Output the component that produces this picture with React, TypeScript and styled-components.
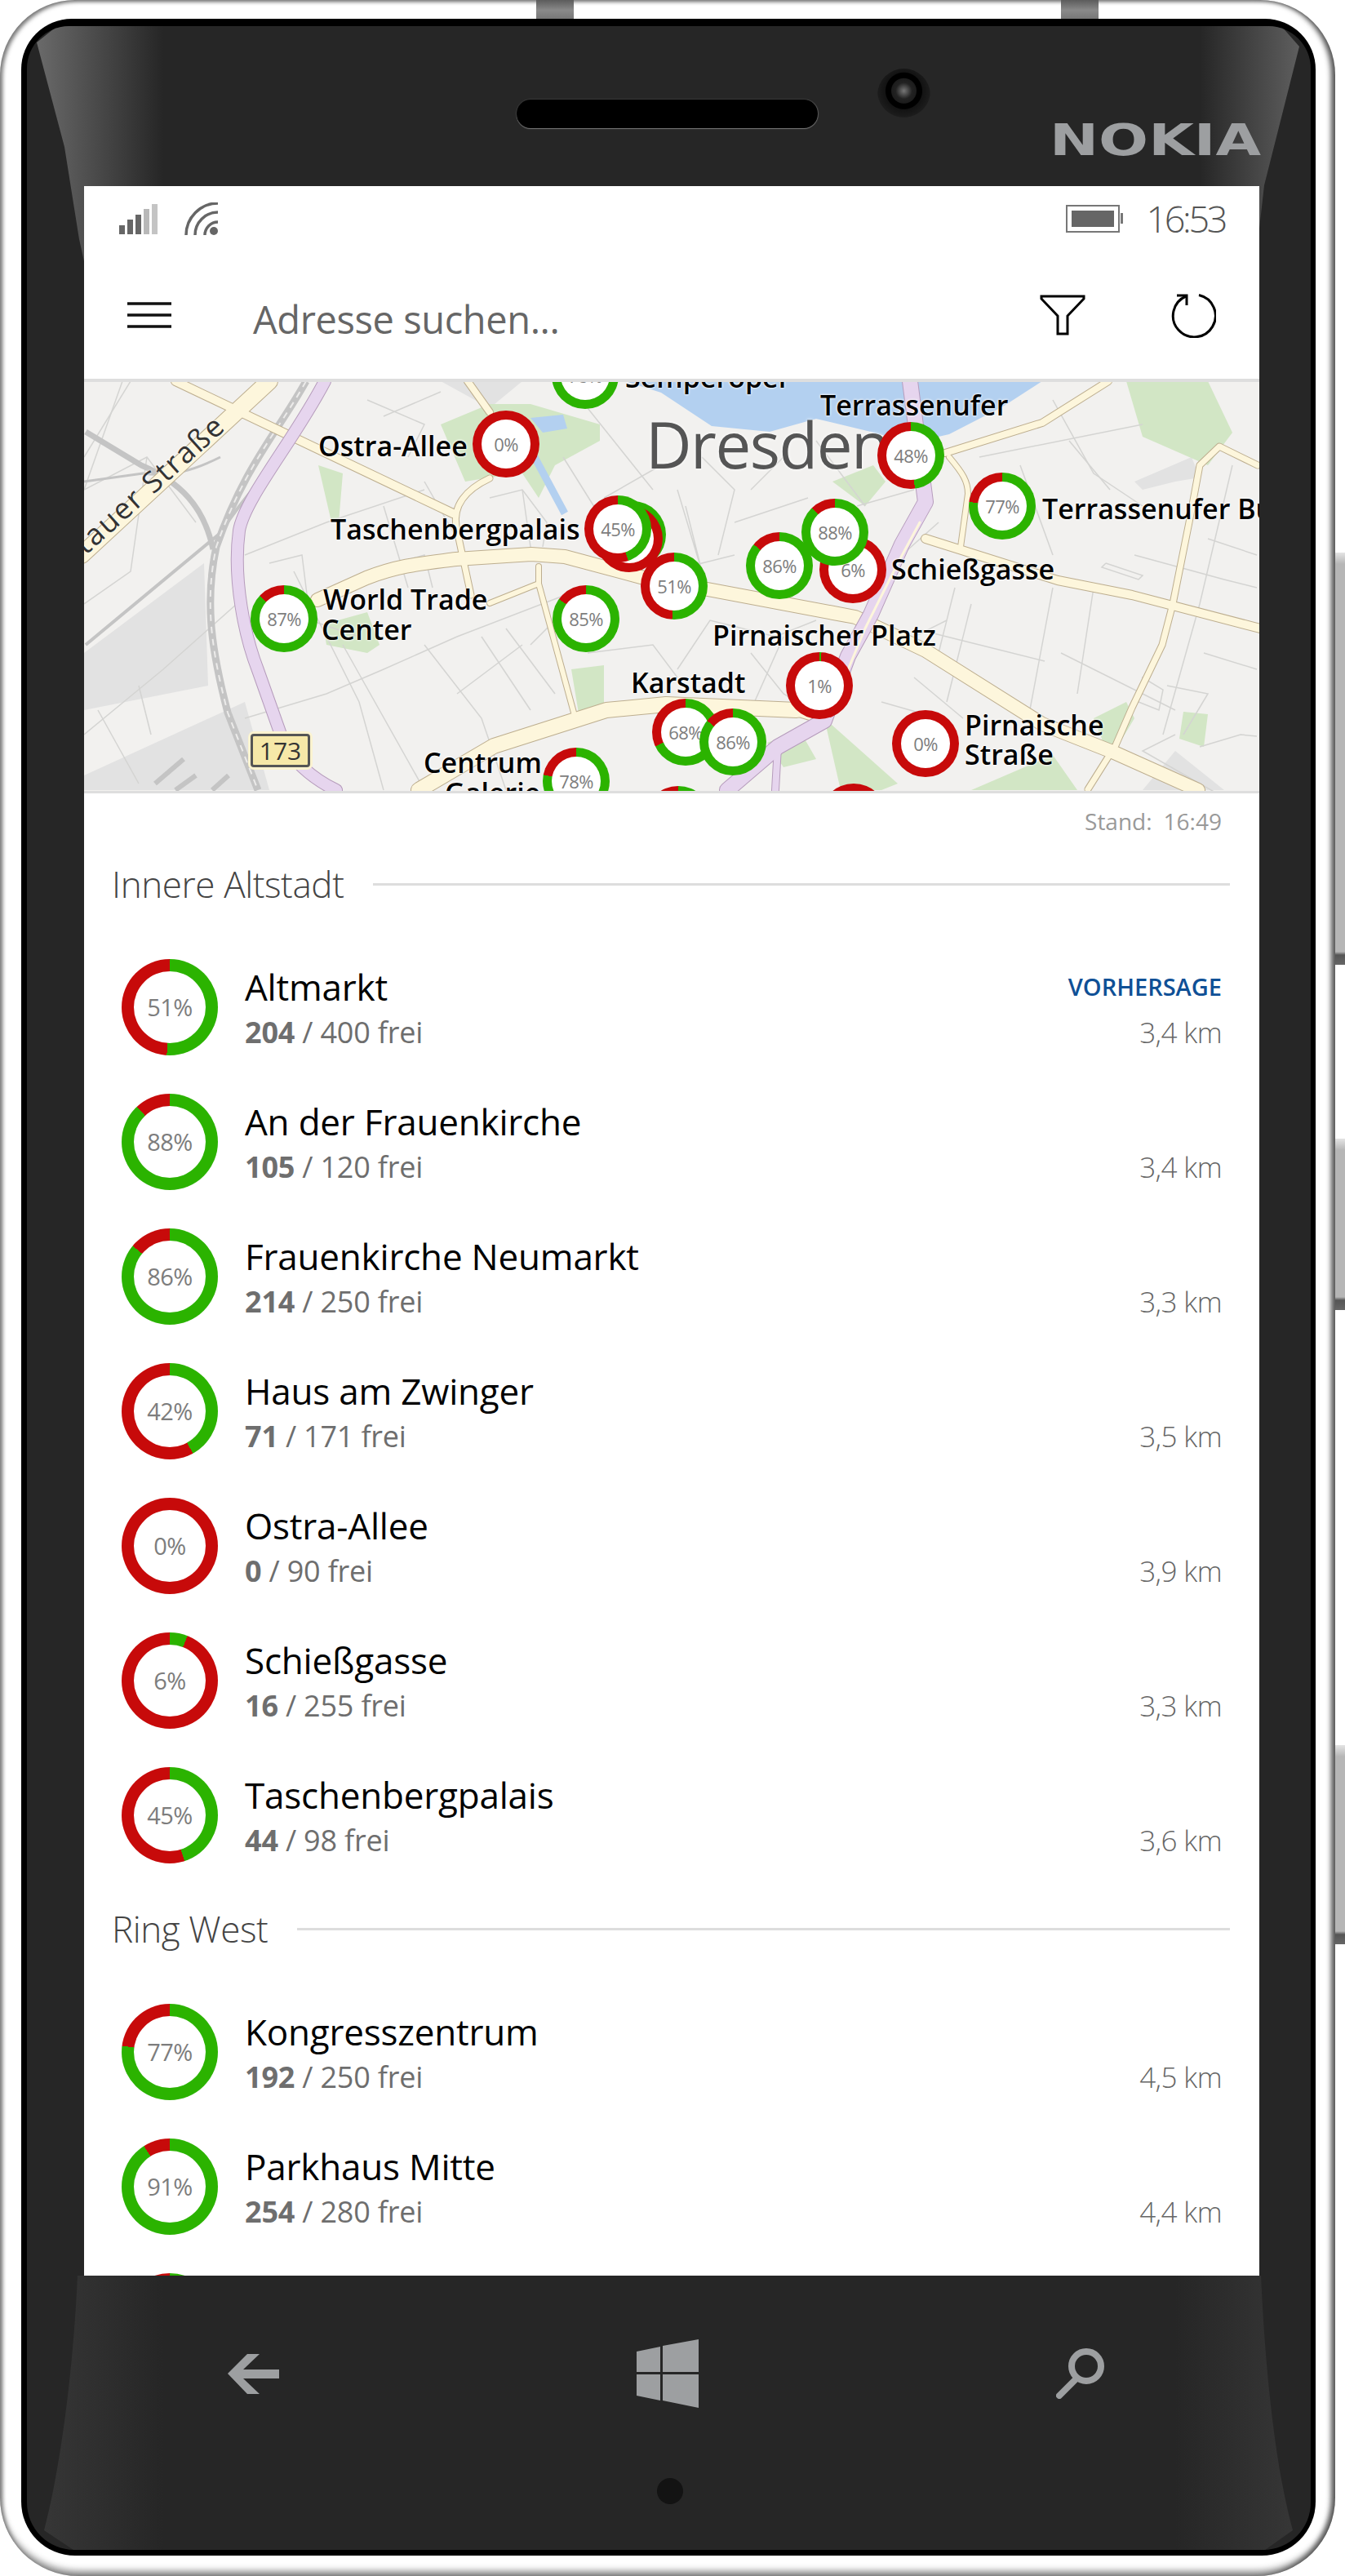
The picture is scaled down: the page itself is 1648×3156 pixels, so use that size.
import React from 'react'
import styled, { createGlobalStyle } from 'styled-components'

const FONT = '"Open Sans", "Noto Sans", sans-serif'
const MAP_X = 103
const MAP_Y = 468

type Garage = { name: string; free: number; total: number; pct: number; km: string; forecast?: boolean }

const altstadt: Garage[] = [
  { name: 'Altmarkt', free: 204, total: 400, pct: 51, km: '3,4 km', forecast: true },
  { name: 'An der Frauenkirche', free: 105, total: 120, pct: 88, km: '3,4 km' },
  { name: 'Frauenkirche Neumarkt', free: 214, total: 250, pct: 86, km: '3,3 km' },
  { name: 'Haus am Zwinger', free: 71, total: 171, pct: 42, km: '3,5 km' },
  { name: 'Ostra-Allee', free: 0, total: 90, pct: 0, km: '3,9 km' },
  { name: 'Schießgasse', free: 16, total: 255, pct: 6, km: '3,3 km' },
  { name: 'Taschenbergpalais', free: 44, total: 98, pct: 45, km: '3,6 km' },
]

const ringWest: Garage[] = [
  { name: 'Kongresszentrum', free: 192, total: 250, pct: 77, km: '4,5 km' },
  { name: 'Parkhaus Mitte', free: 254, total: 280, pct: 91, km: '4,4 km' },
]

// drawn back to front, the overlaps are as in the picture
const pins = [
  { x: 717, y: 460, pct: 78 },
  { x: 620, y: 544, pct: 0 },
  { x: 775, y: 655, pct: 40 },
  { x: 771, y: 660, pct: 0 },
  { x: 757, y: 648, pct: 45 },
  { x: 348, y: 758, pct: 87 },
  { x: 718, y: 758, pct: 85 },
  { x: 826, y: 718, pct: 51 },
  { x: 706, y: 957, pct: 78 },
  { x: 1116, y: 558, pct: 48 },
  { x: 1228, y: 620, pct: 77 },
  { x: 955, y: 693, pct: 86 },
  { x: 1045, y: 698, pct: 6 },
  { x: 1023, y: 652, pct: 88 },
  { x: 1004, y: 840, pct: 1 },
  { x: 840, y: 897, pct: 68 },
  { x: 898, y: 909, pct: 86 },
  { x: 1134, y: 911, pct: 0 },
  { x: 831, y: 1004, pct: 45 },
  { x: 1046, y: 1001, pct: 0 },
]

const labels = [
  { x: 766, y: 475, text: 'Semperoper' },
  { x: 390, y: 559, text: 'Ostra-Allee' },
  { x: 405, y: 661, text: 'Taschenbergpalais' },
  { x: 396, y: 747, text: 'World Trade' },
  { x: 394, y: 784, text: 'Center' },
  { x: 519, y: 947, text: 'Centrum' },
  { x: 545, y: 984, text: 'Galerie' },
  { x: 773, y: 849, text: 'Karstadt' },
  { x: 1005, y: 509, text: 'Terrassenufer' },
  { x: 1277, y: 636, text: 'Terrassenufer Bus' },
  { x: 1092, y: 710, text: 'Schießgasse' },
  { x: 873, y: 791, text: 'Pirnaischer Platz' },
  { x: 1182, y: 901, text: 'Pirnaische' },
  { x: 1182, y: 937, text: 'Straße' },
]

const minorStreets = [
  'M150 467L103 600', 'M103 560L160 467', 'M240 640L180 560L103 600', 'M180 560L160 700L103 740',
  'M120 870L170 960', 'M103 900L200 820L290 740', 'M170 840L185 900', 'M300 680L400 640L520 600',
  'M300 880L400 850L470 820L560 780L690 730', 'M360 700L440 860L470 968', 'M420 790L520 968',
  'M340 900L400 968', 'M520 790L590 880L620 968', 'M560 850L640 790', 'M590 780L650 870',
  'M620 770L680 850', 'M650 790L700 740', 'M470 620L500 720', 'M330 690L370 680L380 760L440 780',
  'M450 700L520 680L530 720', 'M450 490L520 520L500 560', 'M470 510L540 480', 'M520 590L560 660',
  'M640 600L650 670', 'M600 610L640 600L670 640L665 670', 'M690 560L740 640', 'M720 500L800 600',
  'M740 610L810 570', 'M830 600L860 700L840 620', 'M860 560L900 600L880 680', 'M900 640L990 610',
  'M820 700L900 680', 'M920 600L960 560', 'M830 820L870 760L950 780L1000 760', 'M960 780L920 870',
  'M720 800L800 790L830 830', 'M660 900L760 860', 'M1170 720L1150 800', 'M1250 570L1290 680',
  'M1290 490L1340 580L1400 620', 'M1200 560L1400 520', 'M1310 540L1360 600', 'M1120 770L1280 810',
  'M1190 740L1160 860', 'M1290 720L1260 880', 'M1340 720L1320 850', 'M1390 680L1500 710L1540 720',
  'M1355 690L1400 705L1395 710L1350 695L1355 690', 'M1480 660L1540 680', 'M1510 570L1470 740L1425 900',
  'M1475 800L1540 820', 'M1430 840L1480 850L1450 900', 'M1300 800L1440 870', 'M1400 830L1425 845L1420 870L1395 860Z',
  'M1440 900L1400 920L1540 1000', 'M1470 915L1520 900L1540 902', 'M1120 830L1180 880', 'M1080 860L1150 880',
  'M1000 540L1060 620', 'M1050 620L1120 600', 'M1060 720L1150 640', 'M1100 790L1160 760', 'M920 800L960 850L1010 880',
]

const GlobalStyle = createGlobalStyle`
  html, body {
    margin: 0;
    background: #fff;
  }
  body {
    font-family: ${FONT};
  }
`

const Page = styled.div`
  position: relative;
  width: 1648px;
  height: 3156px;
  overflow: hidden;
`
const TopKey = styled.div<{ $x: number }>`
  position: absolute;
  top: 0;
  left: ${({ $x }) => $x}px;
  width: 46px;
  height: 23px;
  background: linear-gradient(180deg, #5c5c5c, #8a8a8a 55%, #777);
  z-index: 2;
`
const SideKey = styled.div<{ $y: number; $h: number }>`
  position: absolute;
  right: 0;
  top: ${({ $y }) => $y}px;
  width: 12px;
  height: ${({ $h }) => $h}px;
  background: linear-gradient(180deg, #e4e4e4 0, #b6b6b6 14px, #b6b6b6 calc(100% - 16px), #555 calc(100% - 12px), #666 100%);
`
const Frame = styled.div`
  box-sizing: border-box;
  width: 1636px;
  height: 3156px;
  padding: 23px 24px 25px 26px;
  background: #fff;
  border-radius: 92px 92px 96px 96px;
  box-shadow: inset -7px 0 6px -2px #555, inset 4px 3px 5px -1px #777, inset 0 -9px 8px -3px #8a8a8a;
`
const BlackRim = styled.div`
  box-sizing: border-box;
  height: 100%;
  padding: 9px 6px 7px 7px;
  background: #000;
  border-radius: 62px 62px 66px 66px;
`
const Bezel = styled.div`
  position: relative;
  height: 100%;
  background: #262626;
  border-radius: 52px 52px 58px 58px;
  overflow: hidden;
`
const Gloss = styled.svg`
  position: absolute;
  left: 0;
  top: 0;
`
const BezelTop = styled.div`
  position: relative;
  display: flex;
  align-items: flex-start;
  height: 196px;
  padding-left: 600px;
`
const Speaker = styled.div`
  width: 369px;
  height: 35px;
  margin-top: 90px;
  background: #000;
  border-radius: 17px;
  box-shadow: 0 1px 1px #777, 1px 0 1px #555, 0 0 2px #555;
`
const Camera = styled.div`
  width: 65px;
  height: 65px;
  margin: 52px 0 0 73px;
  border-radius: 50%;
  background:
    radial-gradient(circle at 50% 42%, #777 0, #444 6px, #222 10px, #1c1c1c 15px, #000 16px, #000 22px, #131313 23px, #1c1c1c 32px, #262626 33px);
`
const Logo = styled.div`
  margin: 113px 0 0 146px;
  font-family: "DejaVu Sans", sans-serif;
  font-weight: 700;
  font-size: 54px;
  line-height: 54px;
  color: #9d9fa1;
  transform: scaleX(1.33);
  transform-origin: left center;
`
const Screen = styled.div`
  position: relative;
  width: 1440px;
  height: 2560px;
  margin-left: 70px;
  background: #fff;
  overflow: hidden;
`
const StatusBar = styled.div`
  display: flex;
  align-items: center;
  gap: 33px;
  height: 80px;
  padding: 0 42px 0 43px;
`
const Battery = styled.div`
  position: relative;
  box-sizing: border-box;
  width: 66px;
  height: 34px;
  margin-left: auto;
  padding: 5px;
  border: 2px solid #777;
  &::after {
    content: '';
    position: absolute;
    right: -6px;
    top: 8px;
    width: 3px;
    height: 13px;
    background: #777;
  }
`
const BatteryFill = styled.div`
  height: 100%;
  background: #666;
`
const Clock = styled.div`
  font-weight: 300;
  font-size: 45px;
  letter-spacing: -3.4px;
  line-height: 50px;
  color: #555;
`
const AppBar = styled.div`
  display: flex;
  align-items: center;
  height: 156px;
  padding: 0 53px;
`
const SearchHint = styled.div`
  margin-left: 100px;
  padding-top: 10px;
  font-size: 47px;
  letter-spacing: -0.4px;
  line-height: 60px;
  color: #666;
`
const FilterButton = styled.svg`
  margin-left: auto;
  margin-right: 104px;
`
const MapBox = styled.div`
  position: relative;
  height: 501px;
  border-top: 4px solid #dedede;
  border-bottom: 3px solid #dedede;
  background: #f2f1ef;
  overflow: hidden;
`
const MapArt = styled.svg`
  display: block;
`
const PinSpot = styled.div<{ $x: number; $y: number }>`
  position: absolute;
  left: ${({ $x }) => $x - MAP_X - 41}px;
  top: ${({ $y }) => $y - MAP_Y - 41}px;
`
const Donut = styled.div<{ $pct: number; $size: number; $ring: number }>`
  box-sizing: border-box;
  display: flex;
  width: ${({ $size }) => $size}px;
  height: ${({ $size }) => $size}px;
  padding: ${({ $ring }) => $ring}px;
  border-radius: 50%;
  background: conic-gradient(#2bb300 0 ${({ $pct }) => $pct}%, #c70a0a 0);
`
const Hole = styled.div<{ $font: number }>`
  display: flex;
  flex: 1;
  align-items: center;
  justify-content: center;
  border-radius: 50%;
  background: #fff;
  font-size: ${({ $font }) => $font}px;
  letter-spacing: -0.6px;
  color: #7d7d7d;
`
const PlaceLabel = styled.div<{ $x: number; $y: number }>`
  position: absolute;
  left: ${({ $x }) => $x - MAP_X}px;
  top: ${({ $y }) => $y - MAP_Y - 30}px;
  font-weight: 600;
  font-size: 34px;
  line-height: 34px;
  white-space: nowrap;
  color: #000;
  text-shadow: 0 0 3px #fff, 0 0 3px #fff;
`
const CityLabel = styled.div`
  position: absolute;
  left: ${791 - MAP_X}px;
  top: ${518 - MAP_Y - 14}px;
  font-size: 78px;
  letter-spacing: -1.5px;
  line-height: 80px;
  color: #555;
  text-shadow: 0 0 4px #fff;
`
const StreetLabel = styled.div`
  position: absolute;
  right: 1273px;
  top: 29px;
  font-size: 36px;
  letter-spacing: 2px;
  line-height: 36px;
  white-space: nowrap;
  color: #333;
  text-shadow: 0 0 3px #fff;
  transform: rotate(-42deg);
  transform-origin: right center;
`
const RoadShield = styled.div`
  position: absolute;
  left: ${307 - MAP_X}px;
  top: ${899 - MAP_Y}px;
  box-sizing: border-box;
  width: 73px;
  height: 41px;
  border: 3px solid #555;
  border-radius: 4px;
  background: #f6e8a8;
  box-shadow: 0 0 0 3px #fbf3d0;
  font-size: 30px;
  line-height: 35px;
  text-align: center;
  color: #333;
`
const StandRow = styled.div`
  display: flex;
  justify-content: flex-end;
  gap: 14px;
  height: 68px;
  margin-bottom: 8px;
  padding-right: 46px;
  font-size: 28px;
  line-height: 68px;
  color: #999;
`
const SectionHead = styled.div`
  display: flex;
  align-items: center;
  gap: 36px;
  height: 70px;
  margin-bottom: 32px;
  padding: 0 36px 0 34px;
`
const SectionName = styled.div`
  font-weight: 300;
  font-size: 44px;
  letter-spacing: -0.4px;
  white-space: nowrap;
  color: #444;
`
const SectionRule = styled.div`
  flex: 1;
  height: 3px;
  background: #ddd;
`
const Row = styled.div`
  display: flex;
  align-items: center;
  height: 165px;
  padding: 2px 46px 0;
  box-sizing: border-box;
`
const RowText = styled.div`
  flex: 1;
  margin-left: 33px;
  padding-top: 6px;
`
const RowName = styled.div`
  height: 56px;
  font-size: 44px;
  letter-spacing: -0.2px;
  line-height: 56px;
  color: #000;
`
const RowCount = styled.div`
  height: 56px;
  font-size: 36px;
  letter-spacing: -0.2px;
  line-height: 56px;
  color: #6e6e6e;
`
const RowFree = styled.b`
  font-weight: 700;
`
const RowSide = styled.div`
  padding-top: 6px;
  text-align: right;
`
const Forecast = styled.div`
  height: 56px;
  font-weight: 600;
  font-size: 29px;
  line-height: 56px;
  color: #0f5096;
`
const Distance = styled.div`
  height: 56px;
  font-size: 35px;
  font-weight: 300;
  letter-spacing: -0.6px;
  line-height: 56px;
  color: #666;
`
const SectionGap = styled.div`
  height: 23px;
`
const HardwareNav = styled.div`
  position: relative;
  display: flex;
  align-items: center;
  justify-content: space-between;
  height: 240px;
  padding: 0 252px 0 246px;
`
const MicRow = styled.div`
  position: relative;
  padding: 8px 0 0 772px;
`
const Mic = styled.div`
  width: 32px;
  height: 32px;
  border-radius: 50%;
  background: #131313;
`

const Ring = ({ pct, size, ring, font }: { pct: number; size: number; ring: number; font: number }) => (
  <Donut $pct={pct} $size={size} $ring={ring}>
    <Hole $font={font}>{pct}%</Hole>
  </Donut>
)

const GarageRow = ({ garage }: { garage: Garage }) => (
  <Row>
    <Ring pct={garage.pct} size={118} ring={15} font={29} />
    <RowText>
      <RowName>{garage.name}</RowName>
      <RowCount>
        <RowFree>{garage.free}</RowFree> / {garage.total} frei
      </RowCount>
    </RowText>
    <RowSide>
      <Forecast>{garage.forecast ? 'VORHERSAGE' : ''}</Forecast>
      <Distance>{garage.km}</Distance>
    </RowSide>
  </Row>
)

const MapDrawing = () => (
  <MapArt width={1440} height={501} viewBox={`${MAP_X} ${MAP_Y} 1440 501`}>
    <g fill="#e2e2e2">
      <path d="M103 800L250 690L255 840L103 870Z" />
      <path d="M103 950L300 860L330 968H103Z" />
      <path d="M540 467H640L600 500Z" />
      <path d="M1390 590L1460 560L1470 585L1440 590L1400 600Z" />
      <path d="M1400 968L1440 920L1500 968Z" />
    </g>
    <g fill="#d2e6c5">
      <path d="M540 520L600 495L650 495L735 520L735 540L680 570L660 610L640 580L600 585L570 590Z" />
      <path d="M390 570L420 580L415 640L405 635Z" />
      <path d="M396 765L450 750L465 790L450 800L400 790Z" />
      <path d="M700 820L740 815L740 880L710 880Z" />
      <path d="M1380 467H1480L1510 530L1480 570L1400 535Z" />
      <path d="M1020 590L1070 570L1085 590L1060 620Z" />
      <path d="M1340 880L1380 860L1390 880L1360 930Z" />
      <path d="M1450 872L1480 875L1475 915L1445 905Z" />
      <path d="M1010 880L1100 960L1080 968H1030Z" />
      <path d="M1190 968L1290 925L1320 968Z" />
      <path d="M940 910L980 895L1000 930L960 940Z" />
    </g>
    <path
      d="M766 467L810 481L872 522L943 529L1000 513L1067 529L1115 543L1163 532L1229 498L1277 467Z"
      fill="#b3d0f0"
    />
    <path d="M650 512L690 508L695 525L665 530Z" fill="#b3d0f0" />
    <path d="M655 560L692 629" stroke="#b3d0f0" strokeWidth={9} fill="none" />
    <g fill="none" stroke="#d4d4d2" strokeWidth={1.5}>
      {minorStreets.map((d) => (
        <path key={d} d={d} />
      ))}
    </g>
    <g fill="none" stroke="#c4c4c4" strokeLinejoin="round">
      <path d="M375 467C340 530 300 570 265 670C250 740 260 800 279 873L316 968" strokeWidth={9} />
      <path d="M105 529L173 570C220 590 250 620 261 673" strokeWidth={7} />
      <path d="M105 790L270 653C290 620 320 590 340 560" strokeWidth={4} />
      <path d="M103 590L175 580C210 585 240 575 270 560" strokeWidth={3} />
      <path d="M190 960L225 930M215 968L240 950M260 968L280 950" strokeWidth={6} />
    </g>
    <g fill="none" stroke="#ecebea" strokeWidth={2} strokeDasharray="8 7">
      <path d="M375 467C340 530 300 570 265 670C250 740 260 800 279 873L316 968" />
    </g>
    <g fill="none" strokeLinejoin="round" strokeLinecap="round">
      <g stroke="#bdae8f">
        <path d="M100 680L330 467" strokeWidth={22} />
        <path d="M215 467L555 629" strokeWidth={12} />
        <path d="M573 467L600 505" strokeWidth={10} />
        <path d="M600 586C570 600 555 620 559 645L577 729" strokeWidth={9} />
        <path d="M389 735L449 708C490 692 520 690 559 685L651 679L692 682L789 708L867 722L1048 756L1134 797L1277 887L1363 921L1468 968" strokeWidth={18} />
        <path d="M660 694V715L600 739" strokeWidth={8} />
        <path d="M660 715L706 884" strokeWidth={8} />
        <path d="M513 968L605 914L743 870L816 863L976 870" strokeWidth={20} />
        <path d="M1158 555L1277 518L1358 467" strokeWidth={10} />
        <path d="M1163 560C1180 580 1186 590 1186 605L1177 670" strokeWidth={8} />
        <path d="M1134 660L1210 684L1296 711L1387 729L1544 770" strokeWidth={12} />
        <path d="M1541 570L1494 547L1470 570L1457 640L1437 740L1424 790L1387 867L1367 913L1333 967" strokeWidth={9} />
        <path d="M976 870L1010 880" strokeWidth={16} />
      </g>
      <g stroke="#fdf6dc">
        <path d="M100 680L330 467" strokeWidth={20} />
        <path d="M215 467L555 629" strokeWidth={10} />
        <path d="M573 467L600 505" strokeWidth={8} />
        <path d="M600 586C570 600 555 620 559 645L577 729" strokeWidth={7} />
        <path d="M389 735L449 708C490 692 520 690 559 685L651 679L692 682L789 708L867 722L1048 756L1134 797L1277 887L1363 921L1468 968" strokeWidth={16} />
        <path d="M660 694V715L600 739" strokeWidth={6} />
        <path d="M660 715L706 884" strokeWidth={6} />
        <path d="M513 968L605 914L743 870L816 863L976 870" strokeWidth={18} />
        <path d="M1158 555L1277 518L1358 467" strokeWidth={8} />
        <path d="M1163 560C1180 580 1186 590 1186 605L1177 670" strokeWidth={6} />
        <path d="M1134 660L1210 684L1296 711L1387 729L1544 770" strokeWidth={10} />
        <path d="M1541 570L1494 547L1470 570L1457 640L1437 740L1424 790L1387 867L1367 913L1333 967" strokeWidth={7} />
        <path d="M976 870L1010 880" strokeWidth={14} />
      </g>
      <g stroke="#b69cbc">
        <path d="M398 467C360 540 300 610 293 650C285 710 300 780 316 821L343 897C352 930 385 955 412 968" strokeWidth={16} />
        <path d="M1115 467L1134 615L1105 667L1067 753L1039 804L1010 883L953 915L891 968" strokeWidth={20} />
        <path d="M953 915L950 968" strokeWidth={10} />
      </g>
      <g stroke="#e6d5ee">
        <path d="M398 467C360 540 300 610 293 650C285 710 300 780 316 821L343 897C352 930 385 955 412 968" strokeWidth={14} />
        <path d="M1115 467L1134 615L1105 667L1067 753L1039 804L1010 883L953 915L891 968" strokeWidth={18} />
        <path d="M953 915L950 968" strokeWidth={8} />
      </g>
      <path d="M1127 640L1100 690L1060 770L1035 830" stroke="#fdf6dc" strokeWidth={3} />
    </g>
  </MapArt>
)

const App = () => (
  <Page>
    <GlobalStyle />
    <TopKey $x={657} />
    <TopKey $x={1300} />
    <SideKey $y={677} $h={505} />
    <SideKey $y={1395} $h={210} />
    <SideKey $y={2138} $h={244} />
    <Frame>
      <BlackRim>
        <Bezel>
          <Gloss width={1573} height={3092} viewBox="33 32 1573 3092">
            <defs>
              <linearGradient id="glossLeft" gradientUnits="userSpaceOnUse" x1="45" y1="0" x2="200" y2="0">
                <stop offset="0" stopColor="#6a6a6a" />
                <stop offset="1" stopColor="#262626" />
              </linearGradient>
              <linearGradient id="glossRight" gradientUnits="userSpaceOnUse" x1="1592" y1="0" x2="1470" y2="0">
                <stop offset="0" stopColor="#5e5e5e" />
                <stop offset="1" stopColor="#262626" />
              </linearGradient>
              <linearGradient id="sheenLeft" gradientUnits="userSpaceOnUse" x1="55" y1="0" x2="200" y2="0">
                <stop offset="0" stopColor="#363636" />
                <stop offset="1" stopColor="#262626" />
              </linearGradient>
              <linearGradient id="sheenRight" gradientUnits="userSpaceOnUse" x1="1584" y1="0" x2="1440" y2="0">
                <stop offset="0" stopColor="#363636" />
                <stop offset="1" stopColor="#262626" />
              </linearGradient>
            </defs>
            <path d="M45 52L70 32H220V320H103L97 293L79 180Z" fill="url(#glossLeft)" />
            <path d="M1592 57L1570 32H1460V280H1543L1549 227Z" fill="url(#glossRight)" />
            <path d="M95 2788C90 2900 75 3020 54 3100L90 3124H220V2788Z" fill="url(#sheenLeft)" />
            <path d="M1545 2788C1550 2900 1562 3020 1584 3100L1550 3124H1420V2788Z" fill="url(#sheenRight)" />
          </Gloss>
          <BezelTop>
            <Speaker />
            <Camera />
            <Logo>NOKIA</Logo>
          </BezelTop>
          <Screen>
            <StatusBar>
              <svg width={47} height={37} viewBox="0 0 47 37">
                <rect x={0} y={26} width={7} height={11} fill="#666" />
                <rect x={10} y={19} width={7} height={18} fill="#666" />
                <rect x={20} y={13} width={7} height={24} fill="#666" />
                <rect x={30} y={6} width={7} height={31} fill="#b8b8b8" />
                <rect x={40} y={0} width={7} height={37} fill="#c4c4c4" />
              </svg>
              <svg width={41} height={40} viewBox="0 0 41 40" fill="none" stroke="#666" strokeWidth={3.5}>
                <path d="M2 40A39 39 0 0 1 41 1" />
                <path d="M13 40A28 28 0 0 1 41 12" />
                <path d="M25 40A16 16 0 0 1 41 24" />
                <circle cx={36} cy={35} r={5} fill="#666" stroke="none" />
              </svg>
              <Battery>
                <BatteryFill />
              </Battery>
              <Clock>16:53</Clock>
            </StatusBar>
            <AppBar>
              <svg width={54} height={32} viewBox="0 0 54 32" stroke="#111" strokeWidth={3.5}>
                <path d="M0 2H54M0 16H54M0 30H54" />
              </svg>
              <SearchHint>Adresse suchen...</SearchHint>
              <FilterButton width={56} height={50} viewBox="1275 363 56 50" fill="none" stroke="#000" strokeWidth={3}>
                <path d="M1277 365H1329V368L1309 389V411H1297V389L1277 368Z" />
              </FilterButton>
              <svg width={56} height={56} viewBox="1435 359 56 56" fill="none" stroke="#000" strokeWidth={3}>
                <path d="M1470 362.5A26 26 0 1 1 1454 364" />
                <path d="M1443 363H1455V375" />
              </svg>
            </AppBar>
            <MapBox>
              <MapDrawing />
              <StreetLabel>Löbtauer Straße</StreetLabel>
              <CityLabel>Dresden</CityLabel>
              <RoadShield>173</RoadShield>
              {labels.map((label) => (
                <PlaceLabel key={label.text} $x={label.x} $y={label.y}>
                  {label.text}
                </PlaceLabel>
              ))}
              {pins.map((pin) => (
                <PinSpot key={`${pin.x}-${pin.y}`} $x={pin.x} $y={pin.y}>
                  <Ring pct={pin.pct} size={82} ring={11} font={22} />
                </PinSpot>
              ))}
            </MapBox>
            <StandRow>
              <span>Stand:</span>
              <span>16:49</span>
            </StandRow>
            <SectionHead>
              <SectionName>Innere Altstadt</SectionName>
              <SectionRule />
            </SectionHead>
            {altstadt.map((garage) => (
              <GarageRow key={garage.name} garage={garage} />
            ))}
            <SectionGap />
            <SectionHead>
              <SectionName>Ring West</SectionName>
              <SectionRule />
            </SectionHead>
            {ringWest.map((garage) => (
              <GarageRow key={garage.name} garage={garage} />
            ))}
            <Row>
              <Ring pct={93} size={118} ring={15} font={29} />
            </Row>
          </Screen>
          <HardwareNav>
            <svg width={63} height={49} viewBox="281 2883 63 49" fill="#9d9fa1">
              <path d="M281 2907L305 2883H320L300 2902H344V2913H300L320 2932H305Z" />
            </svg>
            <svg width={76} height={84} viewBox="787 2866 76 84" fill="#9d9fa1">
              <path d="M787 2881L816 2875V2906H787Z" />
              <path d="M819 2874L863 2866V2906H819Z" />
              <path d="M787 2909H816V2941L787 2935Z" />
              <path d="M819 2909H863V2950L819 2941Z" />
            </svg>
            <svg width={60} height={62} viewBox="1305 2878 60 62" fill="none" stroke="#9d9fa1" strokeWidth={8}>
              <circle cx={1342} cy={2900} r={18} />
              <path d="M1330 2915L1309 2936" strokeLinecap="round" />
            </svg>
          </HardwareNav>
          <MicRow>
            <Mic />
          </MicRow>
        </Bezel>
      </BlackRim>
    </Frame>
  </Page>
)

export default App
